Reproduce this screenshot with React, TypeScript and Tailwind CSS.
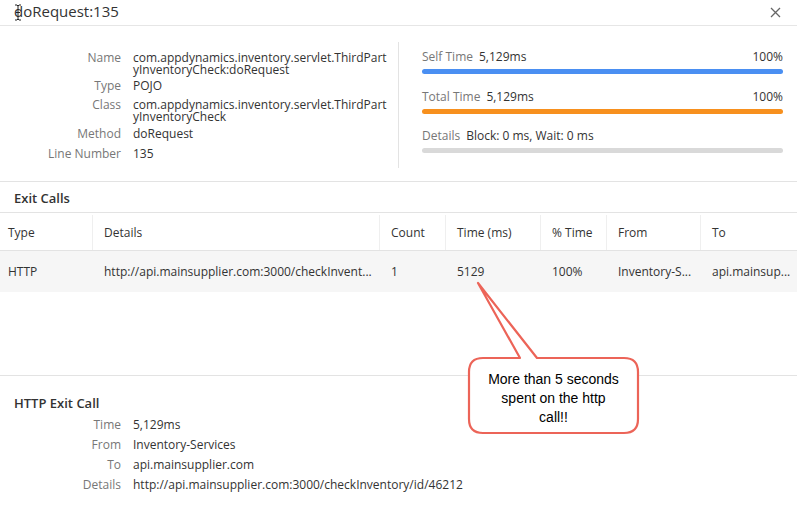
const rows = [
  { label: 'Name', lines: ['com.appdynamics.inventory.servlet.ThirdPart', 'yInventoryCheck:doRequest'], mt: 'mt-0' },
  { label: 'Type', lines: ['POJO'], mt: 'mt-[4px]' },
  { label: 'Class', lines: ['com.appdynamics.inventory.servlet.ThirdPart', 'yInventoryCheck'], mt: 'mt-[7px]' },
  { label: 'Method', lines: ['doRequest'], mt: 'mt-[5px]' },
  { label: 'Line Number', lines: ['135'], mt: 'mt-[8px]' },
]

const cols = [
  { name: 'Type', value: 'HTTP', w: 'w-[92px]', pl: 'pl-2' },
  { name: 'Details', value: 'http://api.mainsupplier.com:3000/checkInvent...', w: 'w-[287px]', pl: 'pl-[11px]' },
  { name: 'Count', value: '1', w: 'w-[66px]', pl: 'pl-[11px]' },
  { name: 'Time (ms)', value: '5129', w: 'w-[95px]', pl: 'pl-[11px]' },
  { name: '% Time', value: '100%', w: 'w-[66px]', pl: 'pl-[11px]' },
  { name: 'From', value: 'Inventory-S...', w: 'w-[94px]', pl: 'pl-[11px]' },
  { name: 'To', value: 'api.mainsup...', w: 'flex-1', pl: 'pl-[11px]' },
]

const exitCall = [
  ['Time', '5,129ms'],
  ['From', 'Inventory-Services'],
  ['To', 'api.mainsupplier.com'],
  ['Details', 'http://api.mainsupplier.com:3000/checkInventory/id/46212'],
]

const bars = [
  { label: 'Self Time', value: '5,129ms', pct: '100%', color: 'bg-[#4a8ff2]', mt: 'mt-0' },
  { label: 'Total Time', value: '5,129ms', pct: '100%', color: 'bg-[#f7901e]', mt: 'mt-[15px]' },
  { label: 'Details', value: 'Block: 0 ms, Wait: 0 ms', pct: '', color: 'bg-[#d9d9d9]', mt: 'mt-[14px]' },
]

export default function App() {
  return (
    <div className="relative w-[797px] h-[508px] bg-white text-[12px] text-[#333] font-['Open_Sans',sans-serif] overflow-hidden">
      {/* header */}
      <div className="relative h-[26px] border-b border-[#e6e6e6] flex items-center justify-between pl-[14px] pr-[16px]">
        <span className="text-[15px] leading-none text-[#333] -mt-[2px]">doRequest:135</span>
        <svg width="11" height="11" viewBox="0 0 11 11" className="-mt-[1px]">
          <path d="M1 1L10 10M10 1L1 10" stroke="#666" strokeWidth="1.3" />
        </svg>
        <svg width="8" height="17" viewBox="0 0 8 17" className="absolute left-[14px] top-[4px]">
          <path d="M1 1h2l1 1 1-1h2M4 2v13M1 16h2l1-1 1 1h2M2 8.5h4" stroke="#222" strokeWidth="1" fill="none" />
        </svg>
      </div>

      {/* summary */}
      <div className="flex h-[156px] border-b border-[#e3e3e3]">
        <div className="w-[398px] pt-[26px]">
          {rows.map((r) => (
            <div key={r.label} className={`flex leading-[12px] ${r.mt}`}>
              <div className="w-[121px] text-right text-[#777]">{r.label}</div>
              <div className="ml-[12px]">
                {r.lines.map((l) => (
                  <div key={l}>{l}</div>
                ))}
              </div>
            </div>
          ))}
        </div>
        <div className="w-px bg-[#e3e3e3] mt-[16px] h-[126px]" />
        <div className="flex-1 pl-[23px] pr-[14px] pt-[23px]">
          {bars.map((b) => (
            <div key={b.label} className={b.mt}>
              <div className="flex justify-between leading-[16px]">
                <span>
                  <span className="text-[#777]">{b.label}</span>
                  <span className="ml-[6px]">{b.value}</span>
                </span>
                <span>{b.pct}</span>
              </div>
              <div className={`mt-[4px] h-[5px] rounded-full ${b.color}`} />
            </div>
          ))}
        </div>
      </div>

      {/* exit calls */}
      <div className="h-[31px] flex items-center pl-[14px] pt-[3px] text-[13px] font-semibold border-b border-[#e3e3e3]">
        Exit Calls
      </div>
      <div className="flex h-[38px] pt-[2px] border-b border-[#e3e3e3]">
        {cols.map((c, i) => (
          <div
            key={c.name}
            className={`${c.w} ${c.pl} flex items-center ${i > 0 ? 'border-l border-[#efefef]' : ''}`}
          >
            {c.name}
          </div>
        ))}
      </div>
      <div className="flex h-[41px] bg-[#f6f6f6]">
        {cols.map((c, i) => (
          <div key={c.name} className={`${c.w} ${c.pl} flex items-center whitespace-nowrap overflow-hidden ${i > 0 ? 'border-l border-transparent' : ''}`}>
            {c.value}
          </div>
        ))}
      </div>

      {/* http exit call */}
      <div className="mt-[83px] border-t border-[#e3e3e3] pt-[18px]">
        <div className="pl-[14px] text-[13px] font-semibold leading-[18px]">HTTP Exit Call</div>
        <div className="mt-[3px]">
          {exitCall.map(([k, v]) => (
            <div key={k} className="flex leading-[20px]">
              <div className="w-[121px] text-right text-[#777]">{k}</div>
              <div className="ml-[12px]">{v}</div>
            </div>
          ))}
        </div>
      </div>

      {/* callout */}
      <svg width="797" height="508" className="absolute left-0 top-0 pointer-events-none">
        <path
          d="M483 358 H520 L478 283 L537 358 H624 Q638 358 638 372 V419 Q638 433 624 433 H483 Q469 433 469 419 V372 Q469 358 483 358 Z"
          fill="white"
          stroke="#ec6458"
          strokeWidth="2.2"
          strokeLinejoin="round"
        />
      </svg>
      <div className="absolute left-[469px] top-[370px] w-[169px] text-center text-[14px] leading-[19px] text-black font-['Liberation_Sans',Arial,sans-serif]">
        More than 5 seconds
        <br />
        spent on the http
        <br />
        call!!
      </div>
    </div>
  )
}
